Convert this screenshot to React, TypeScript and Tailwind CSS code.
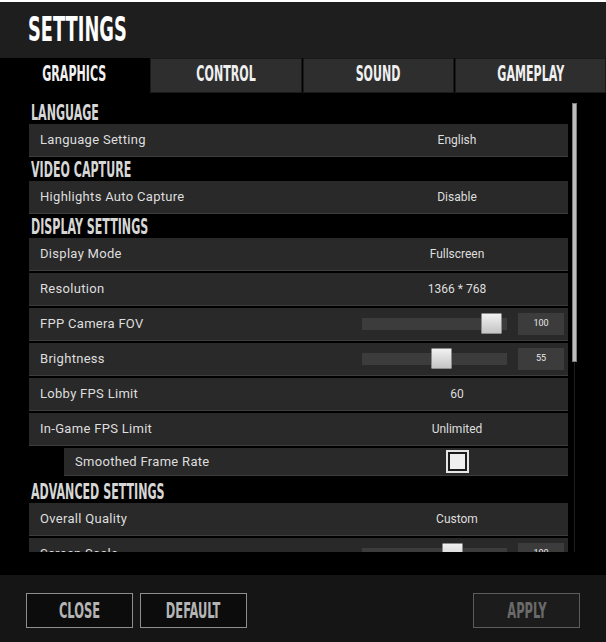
import React from 'react';

const cond = "font-['DejaVu_Sans_Condensed','DejaVu_Sans',sans-serif] font-bold";
const body = "font-['Roboto','Liberation_Sans',sans-serif]";

type Item =
  | { kind: 'head'; label: string }
  | { kind: 'value'; label: string; value: string }
  | { kind: 'slider'; label: string; value: number; pos: number }
  | { kind: 'check'; label: string };

const items: Item[] = [
  { kind: 'head', label: 'LANGUAGE' },
  { kind: 'value', label: 'Language Setting', value: 'English' },
  { kind: 'head', label: 'VIDEO CAPTURE' },
  { kind: 'value', label: 'Highlights Auto Capture', value: 'Disable' },
  { kind: 'head', label: 'DISPLAY SETTINGS' },
  { kind: 'value', label: 'Display Mode', value: 'Fullscreen' },
  { kind: 'value', label: 'Resolution', value: '1366 * 768' },
  { kind: 'slider', label: 'FPP Camera FOV', value: 100, pos: 119 },
  { kind: 'slider', label: 'Brightness', value: 55, pos: 69 },
  { kind: 'value', label: 'Lobby FPS Limit', value: '60' },
  { kind: 'value', label: 'In-Game FPS Limit', value: 'Unlimited' },
  { kind: 'check', label: 'Smoothed Frame Rate' },
  { kind: 'head', label: 'ADVANCED SETTINGS' },
  { kind: 'value', label: 'Overall Quality', value: 'Custom' },
  { kind: 'slider', label: 'Screen Scale', value: 100, pos: 80 },
];

function Heading({ label }: { label: string }) {
  return (
    <div className="h-[22px] pl-[2px] overflow-visible">
      <span className={`${cond} inline-block text-[22px] leading-[19px] text-[#d6d6d6] origin-left scale-x-[0.56] whitespace-nowrap`}>
        {label}
      </span>
    </div>
  );
}

function Slider({ value, pos }: { value: number; pos: number }) {
  return (
    <div className="flex items-center pl-[16px]">
      <div className="relative w-[145px] h-[12px] bg-[#3c3c3c]">
        <div
          className="absolute top-[-5px] w-[21px] h-[21px] border border-[#8c8c8c] bg-gradient-to-b from-[#f2f2f2] to-[#c4c4c4] rounded-[1px]"
          style={{ left: pos }}
        />
      </div>
      <div className={`${body} ml-[11px] w-[46px] h-[22px] bg-[#3c3c3c] flex items-center justify-center text-[9px] text-[#e8e8e8]`}>
        {value}
      </div>
    </div>
  );
}

function Row({ item }: { item: Item }) {
  if (item.kind === 'head') return <Heading label={item.label} />;
  const sub = item.kind === 'check';
  return (
    <div
      className={`flex items-center bg-[#292929] border-b border-[#3d3d3d] ${
        sub ? 'ml-[35px] h-[28px] mt-[1px] mb-[5px]' : 'h-[33px] mb-[2px]'
      }`}
    >
      <div className={`${body} flex-1 pl-[11px] text-[13px] text-[#dedede] tracking-[0.3px] whitespace-nowrap`}>
        {item.label}
      </div>
      <div className="w-[222px] flex items-center">
        {item.kind === 'value' && (
          <div className={`${body} w-full text-center text-[12px] text-[#dedede]`}>{item.value}</div>
        )}
        {item.kind === 'slider' && <Slider value={item.value} pos={item.pos} />}
        {item.kind === 'check' && (
          <div className="w-full flex justify-center">
            <div className="w-[23px] h-[23px] border-2 border-[#e6e6e6] p-[2px] bg-[#1c1c1c]">
              <div className="w-[15px] h-[15px] bg-[#efefef]" />
            </div>
          </div>
        )}
      </div>
    </div>
  );
}

const tabs = ['GRAPHICS', 'CONTROL', 'SOUND', 'GAMEPLAY'];

function Button({ label, disabled }: { label: string; disabled?: boolean }) {
  return (
    <button
      className={`w-[107px] h-[35px] border flex items-center justify-center ${
        disabled ? 'border-[#5c5c5c] bg-[#1c1c1c] text-[#6a6a6a]' : 'border-[#8e8e8e] bg-[#0c0c0c] text-[#b4b4b4]'
      }`}
    >
      <span className={`${cond} inline-block text-[22px] leading-none scale-x-[0.58] whitespace-nowrap`}>{label}</span>
    </button>
  );
}

export default function App() {
  return (
    <div className="w-[606px] h-[642px] bg-black flex flex-col overflow-hidden">
      <div className="h-[2px] bg-white shrink-0" />
      <header className="h-[56px] shrink-0 bg-[#1e1e1e] flex items-center pl-[28px] pb-[2px]">
        <span className={`${cond} inline-block text-[33px] leading-none text-white origin-left scale-x-[0.6] whitespace-nowrap`}>
          SETTINGS
        </span>
      </header>
      <nav className="h-[35px] shrink-0 flex gap-[1px] bg-black">
        {tabs.map((t, i) => (
          <div
            key={t}
            className={`flex-1 flex items-center justify-center pb-[4px] ${
              i === 0 ? 'bg-black' : 'bg-[#2e2e2e] border border-[#1a1a1a]'
            }`}
          >
            <span className={`${cond} inline-block text-[22px] leading-none text-[#f0f0f0] scale-x-[0.56] whitespace-nowrap`}>
              {t}
            </span>
          </div>
        ))}
      </nav>
      <main className="h-[482px] shrink-0 flex bg-black">
        <div className="ml-[29px] w-[539px] h-[459px] overflow-hidden pt-[9px]">
          {items.map((it, i) => (
            <Row key={i} item={it} />
          ))}
        </div>
        <div className="ml-[4px] w-[5px] pt-[10px] h-[459px] flex flex-col items-center">
          <div className="w-[5px] h-[259px] bg-[#bdbdbd] border border-[#7c7c7c]" />
          <div className="w-[1px] flex-1 bg-[#1e1e1e]" />
        </div>
      </main>
      <footer className="flex-1 bg-[#151515] flex items-start pt-[18px] px-[26px] gap-[7px]">
        <Button label="CLOSE" />
        <Button label="DEFAULT" />
        <div className="flex-1" />
        <Button label="APPLY" disabled />
      </footer>
    </div>
  );
}
